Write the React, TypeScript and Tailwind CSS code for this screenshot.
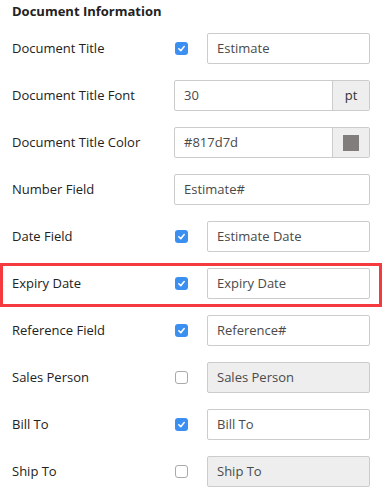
import React from "react";

type Row = {
  label: string;
  value: string;
  check?: boolean;
  disabled?: boolean;
  addon?: "pt" | "swatch";
  highlight?: boolean;
};

const rows: Row[] = [
  { label: "Document Title", value: "Estimate", check: true },
  { label: "Document Title Font", value: "30", addon: "pt" },
  { label: "Document Title Color", value: "#817d7d", addon: "swatch" },
  { label: "Number Field", value: "Estimate#" },
  { label: "Date Field", value: "Estimate Date", check: true },
  { label: "Expiry Date", value: "Expiry Date", check: true, highlight: true },
  { label: "Reference Field", value: "Reference#", check: true },
  { label: "Sales Person", value: "Sales Person", check: false, disabled: true },
  { label: "Bill To", value: "Bill To", check: true },
  { label: "Ship To", value: "Ship To", check: false, disabled: true },
];

const Checkbox = ({ checked }: { checked: boolean }) =>
  checked ? (
    <div className="w-[13px] h-[13px] rounded-[3px] bg-[#3a8ff0] flex items-center justify-center">
      <svg width="9" height="9" viewBox="0 0 10 10">
        <path d="M2 5.3 L4.2 7.4 L8 2.8" fill="none" stroke="white" strokeWidth="1.7" strokeLinecap="round" strokeLinejoin="round" />
      </svg>
    </div>
  ) : (
    <div className="w-[13px] h-[13px] rounded-[3px] bg-white border border-[#a9a9a9]" />
  );

const Field = ({ row }: { row: Row }) => {
  const box = row.disabled ? "bg-[#eeeeee]" : "bg-white";
  return (
    <div className={`flex-1 h-[31px] flex border border-[#cccccc] rounded-[2px] ${box}`}>
      <div className="flex-1 flex items-center pl-[9px] text-[13px] text-[#4a4a4a]">{row.value}</div>
      {row.addon === "pt" && (
        <div className="w-[37px] flex items-center justify-center bg-[#eeeeee] border-l border-[#cccccc] text-[13px] text-[#333]">
          pt
        </div>
      )}
      {row.addon === "swatch" && (
        <div className="w-[37px] flex items-center justify-center bg-[#eeeeee] border-l border-[#cccccc]">
          <div className="w-[16px] h-[16px] bg-[#817d7d]" />
        </div>
      )}
    </div>
  );
};

const FieldRow = ({ row }: { row: Row }) => {
  const inner = (
    <>
      <div className="w-[162px] shrink-0 text-[13px] text-[#222]">{row.label}</div>
      {row.check !== undefined && (
        <div className="w-[33px] shrink-0 flex items-center pl-[1px]">
          <Checkbox checked={row.check} />
        </div>
      )}
      <Field row={row} />
    </>
  );
  if (row.highlight) {
    return (
      <div className="mt-[3px] border-[3px] border-[#f43a3f] flex items-center pl-[9px] pr-[9px] pt-[2px] pb-[5px]">
        {inner}
      </div>
    );
  }
  return <div className="flex items-center px-[12px] py-[8px]">{inner}</div>;
};

export default function App() {
  return (
    <div className="w-[382px] h-[501px] bg-white overflow-hidden" style={{ fontFamily: "'Open Sans', 'Liberation Sans', sans-serif" }}>
      <div className="px-[12px] pt-[2px] h-[25px] text-[13px] font-bold text-[#222]">Document Information</div>
      {rows.map((r) => (
        <FieldRow key={r.label} row={r} />
      ))}
    </div>
  );
}
